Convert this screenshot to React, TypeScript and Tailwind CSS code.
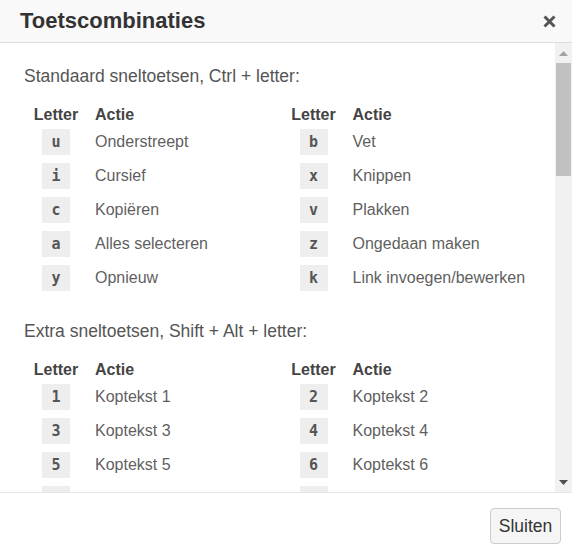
import React from "react";

type Sneltoets = { key: string; actie: string };

const standaard: Sneltoets[][] = [
  [
    { key: "u", actie: "Onderstreept" },
    { key: "i", actie: "Cursief" },
    { key: "c", actie: "Kopiëren" },
    { key: "a", actie: "Alles selecteren" },
    { key: "y", actie: "Opnieuw" },
  ],
  [
    { key: "b", actie: "Vet" },
    { key: "x", actie: "Knippen" },
    { key: "v", actie: "Plakken" },
    { key: "z", actie: "Ongedaan maken" },
    { key: "k", actie: "Link invoegen/bewerken" },
  ],
];

const extra: Sneltoets[][] = [
  [
    { key: "1", actie: "Koptekst 1" },
    { key: "3", actie: "Koptekst 3" },
    { key: "5", actie: "Koptekst 5" },
    { key: "7", actie: "Paragraaf" },
  ],
  [
    { key: "2", actie: "Koptekst 2" },
    { key: "4", actie: "Koptekst 4" },
    { key: "6", actie: "Koptekst 6" },
    { key: "8", actie: "Bijschrift" },
  ],
];

// Eén tabel met kolommen Letter / Actie
function Tabel({ rows }: { rows: Sneltoets[] }) {
  return (
    <table className="border-collapse">
      <thead>
        <tr className="h-[22px]">
          <th className="w-[64px] p-0 text-center align-bottom font-bold leading-[20px] text-[#444]">Letter</th>
          <th className="p-0 pl-[7px] text-left align-bottom font-bold leading-[20px] text-[#444]">Actie</th>
        </tr>
      </thead>
      <tbody>
        {rows.map((r) => (
          <tr key={r.key} className="h-[34px]">
            <td className="p-0 text-center">
              <kbd className="inline-flex h-[26px] w-[28px] items-center justify-center bg-[#eeeeee] font-['DejaVu_Sans_Mono',monospace] text-[15px] font-bold text-[#555]">
                {r.key}
              </kbd>
            </td>
            <td className="p-0 pl-[7px] whitespace-nowrap text-[#5f5f5f]">{r.actie}</td>
          </tr>
        ))}
      </tbody>
    </table>
  );
}

function Sectie({ titel, kolommen }: { titel: string; kolommen: Sneltoets[][] }) {
  return (
    <section>
      <p className="mb-[16px] text-[17.5px] leading-[22px] text-[#555]">{titel}</p>
      <div className="grid grid-cols-[257.5px_1fr]">
        {kolommen.map((k, i) => (
          <Tabel key={i} rows={k} />
        ))}
      </div>
    </section>
  );
}

function Scrollbalk() {
  return (
    <div className="flex w-[17px] shrink-0 flex-col bg-[#f1f1f1]">
      <div className="flex h-[20px] items-center justify-center">
        <svg width="9" height="5" viewBox="0 0 9 5">
          <path d="M0 5 L4.5 0 L9 5 Z" fill="#a3a3a3" />
        </svg>
      </div>
      <div className="mx-[1px] h-[113px] bg-[#c1c1c1]" />
      <div className="flex-1" />
      <div className="flex h-[20px] items-center justify-center">
        <svg width="9" height="5" viewBox="0 0 9 5">
          <path d="M0 0 L9 0 L4.5 5 Z" fill="#505050" />
        </svg>
      </div>
    </div>
  );
}

export default function App() {
  return (
    <div className="flex h-[554px] w-[572px] flex-col bg-white font-['Liberation_Sans',Arial,sans-serif] text-[16px]">
      <header className="flex h-[43px] shrink-0 items-center justify-between border-b border-[#dddddd] bg-[#f9f9f9] pl-[20px] pr-[16px]">
        <h1 className="text-[22px] font-bold leading-none text-[#333]">Toetscombinaties</h1>
        <svg width="13" height="13" viewBox="0 0 13 13" className="mt-[1px]">
          <path d="M1.5 1.5 L11.5 11.5 M11.5 1.5 L1.5 11.5" stroke="#555" strokeWidth="3" strokeLinecap="butt" />
        </svg>
      </header>
      <div className="flex h-[449px] shrink-0">
        <div className="flex-1 overflow-hidden px-[24px] pt-[22px]">
          <Sectie titel="Standaard sneltoetsen, Ctrl + letter:" kolommen={standaard} />
          <div className="h-[25px]" />
          <Sectie titel="Extra sneltoetsen, Shift + Alt + letter:" kolommen={extra} />
        </div>
        <Scrollbalk />
      </div>
      <footer className="flex flex-1 items-start justify-end border-t border-[#e5e5e5] pr-[11px] pt-[15px]">
        <button className="h-[36px] w-[71px] rounded-[4px] border border-[#cccccc] bg-[#f5f5f5] text-[17.5px] text-[#333]">
          Sluiten
        </button>
      </footer>
    </div>
  );
}
